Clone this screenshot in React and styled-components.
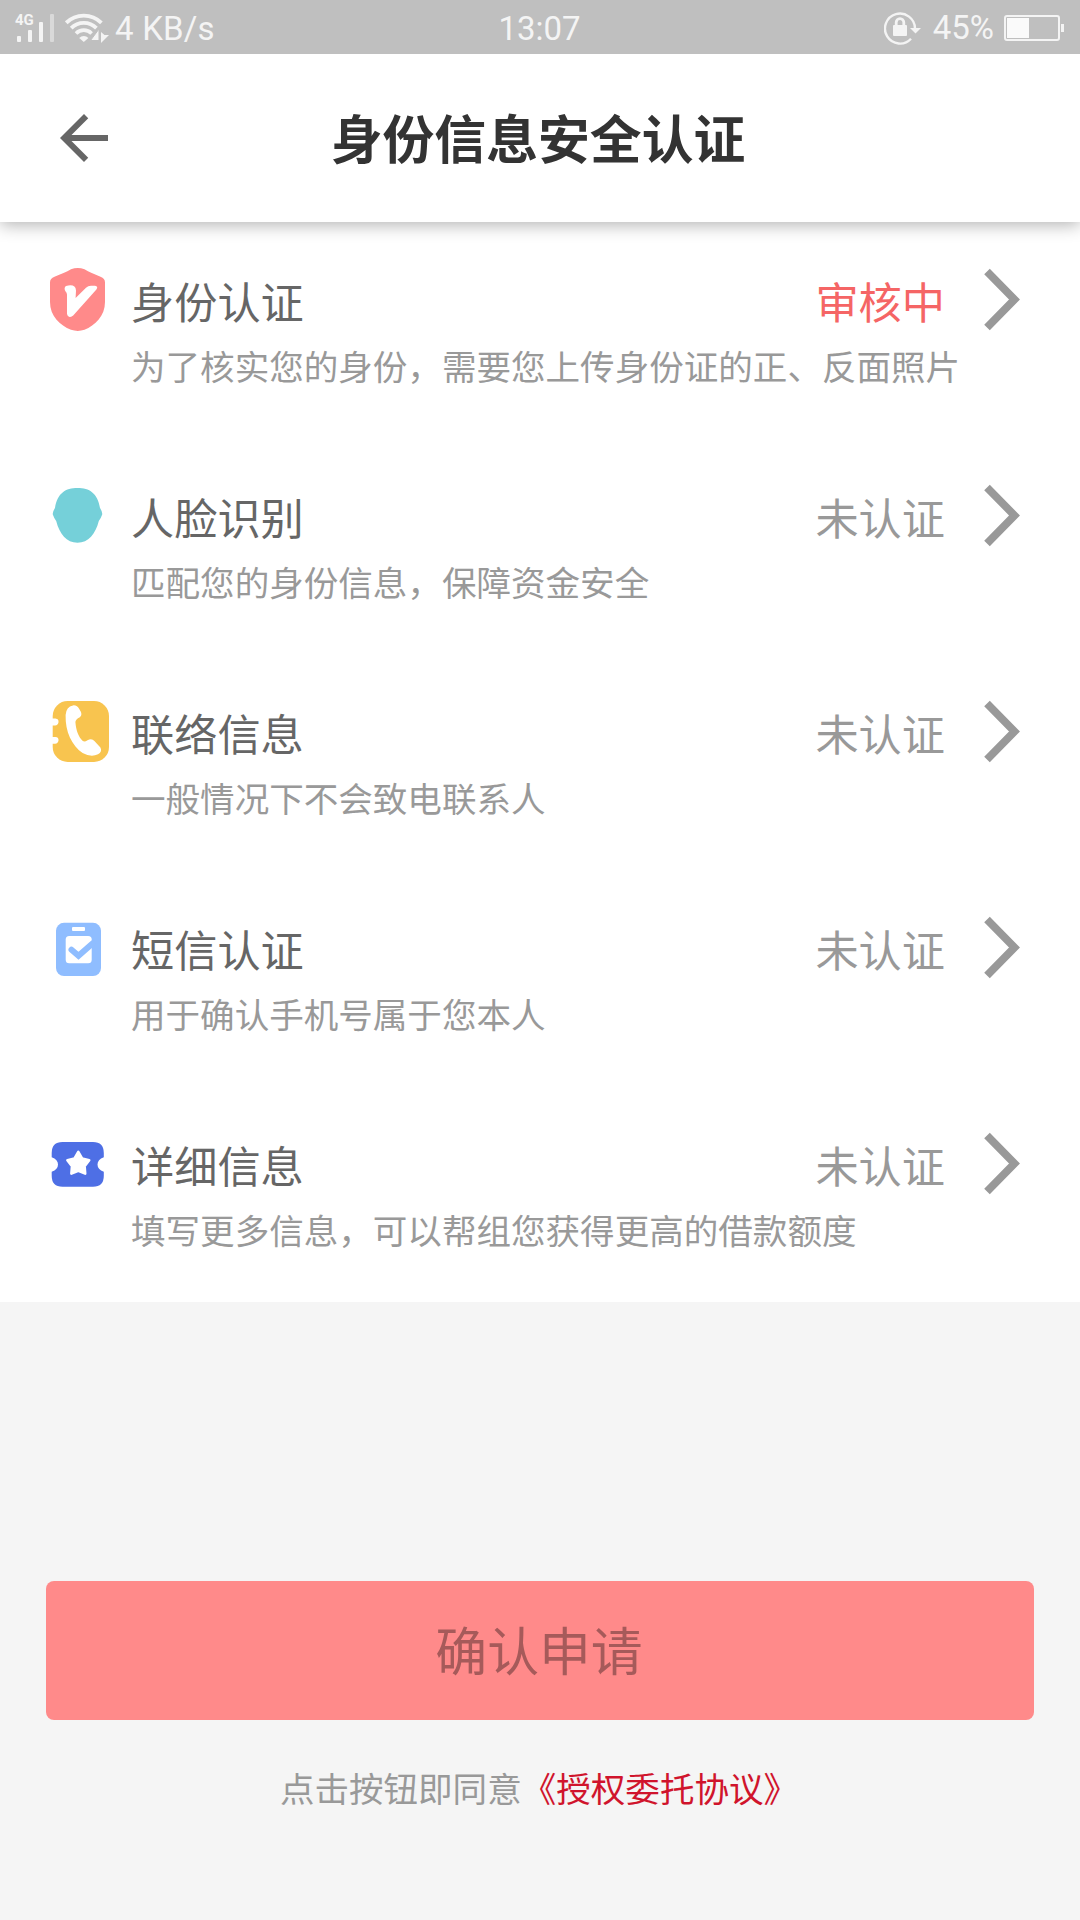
import React from "react";
import styled, { createGlobalStyle } from "styled-components";

const GlobalStyle = createGlobalStyle`
  * {
    box-sizing: border-box;
  }

  body {
    margin: 0;
    background-color: #f5f5f5;
    font-family: "Noto Sans CJK SC", sans-serif;
  }
`;

const Page = styled.div`
  width: 1080px;
  height: 1920px;
  display: flex;
  flex-direction: column;
  background-color: #f5f5f5;
  overflow: hidden;
`;

// Status bar
const StatusBar = styled.div`
  height: 54px;
  flex-shrink: 0;
  display: grid;
  grid-template-columns: 1fr auto 1fr;
  align-items: center;
  padding: 0 16px 0 15px;
  background-color: #bfbfbf;
  color: #f4f4f4;
  font-family: Roboto, sans-serif;
  font-size: 33px;
  line-height: 54px;
`;

const StatusGroup = styled.div`
  display: flex;
  align-items: center;
  justify-content: ${(props) => (props.$end ? "flex-end" : "flex-start")};
`;

const Signal = styled.div`
  position: relative;
  width: 40px;
  height: 54px;
  margin-right: 10px;
`;

const NetworkType = styled.span`
  position: absolute;
  left: 0;
  top: 10px;
  font-size: 15px;
  font-weight: 700;
  line-height: 18px;
`;

const Clock = styled.span`
  padding-top: 2px;
`;

const Speed = styled.span`
  margin-left: 6px;
  padding-top: 2px;
  letter-spacing: 0.2px;
`;

const Battery = styled.span`
  margin: 0 10px 0 12px;
`;

// Title bar
const Header = styled.header`
  position: relative;
  z-index: 1;
  height: 168px;
  flex-shrink: 0;
  display: grid;
  grid-template-columns: 72px 1fr 72px;
  align-items: center;
  padding: 0 48px;
  background-color: #fff;
  box-shadow: 0 3px 16px rgba(0, 0, 0, 0.3);
  clip-path: inset(0 0 -24px 0);
`;

const BackButton = styled.button`
  width: 72px;
  height: 72px;
  padding: 0;
  border: none;
  background: none;
  cursor: pointer;

  svg {
    display: block;
  }
`;

const Title = styled.h1`
  margin: 0;
  padding: 0 4px 2px 0;
  color: #333;
  font-size: 51.84px;
  font-weight: 700;
  line-height: 76px;
  text-align: center;
`;

// List of verifications
const List = styled.ul`
  margin: 0;
  padding: 0;
  list-style: none;
  background-color: #fff;
`;

const Item = styled.li`
  height: 216px;
  display: grid;
  grid-template-columns: 64px 1fr auto 36px;
  grid-template-rows: 64px 50px;
  row-gap: 8px;
  padding: 46px 60px 0 46px;
`;

const ItemName = styled.div`
  padding-left: 21px;
  color: #666;
  font-size: 43.2px;
  line-height: 64px;
`;

const ItemStatus = styled.div`
  margin-right: 39px;
  color: ${(props) => (props.$pending ? "#f56565" : "#999")};
  font-size: 43.2px;
  line-height: 64px;
`;

const ItemNote = styled.div`
  grid-column: 2 / -1;
  padding-left: 21px;
  color: #999;
  font-size: 34.56px;
  line-height: 50px;
  white-space: nowrap;
`;

// Bottom
const Footer = styled.footer`
  display: flex;
  flex-direction: column;
  padding: 279px 46px 0;
`;

const SubmitButton = styled.button`
  height: 139px;
  padding: 0 2px 4px 0;
  border: none;
  border-radius: 8px;
  background-color: #ff8a8a;
  color: #a65a5a;
  font-family: inherit;
  font-size: 51.84px;
  line-height: 76px;
`;

const Agreement = styled.p`
  margin: 42px 0 0;
  padding-right: 2px;
  color: #999;
  font-size: 34.56px;
  line-height: 50px;
  text-align: center;
`;

const AgreementLink = styled.a`
  color: #d0142c;
  text-decoration: none;
`;

const SignalBars = () => (
  <svg width="40" height="54" fill="#f4f4f4">
    <rect x="2" y="35" width="4" height="6" rx="1" />
    <rect x="13" y="29" width="4" height="12" rx="1" />
    <rect x="24" y="21" width="4" height="20" rx="1" />
    <rect x="35" y="13" width="4" height="28" rx="1" opacity="0.5" />
  </svg>
);

const WifiIcon = () => (
  <svg width="44" height="54" fill="none" stroke="#f4f4f4">
    <path d="M1.2 21.8a25 25 0 0 1 35.2 0" strokeWidth="3.8" />
    <path d="M6.2 27.2a17.8 17.8 0 0 1 25.2 0" strokeWidth="3.8" />
    <path d="M11 32.4a11 11 0 0 1 15.6 0" strokeWidth="3.6" />
    <path d="M14.2 37a6.5 6.5 0 0 1 9.2 0L18.8 41z" fill="#f4f4f4" stroke="none" />
    <path d="M34 28v11.500H25.500z" fill="#f4f4f4" stroke="#bfbfbf" strokeWidth="1" />
    <path d="M36 31v11l8-8h-4.500z" fill="#f4f4f4" stroke="none" />
  </svg>
);

const RotationLockIcon = () => (
  <svg width="37" height="54" fill="none" stroke="#f4f4f4">
    <path d="M27 37.8A15 15 0 1 1 31 27.5" strokeWidth="2.4" />
    <path d="M26 27h11l-5.500 5.400z" fill="#f4f4f4" stroke="none" />
    <rect x="9" y="24" width="14" height="11" rx="1" fill="#f4f4f4" stroke="none" />
    <path d="M12.200 25v-3.500a3.800 3.800 0 0 1 7.600 0V25" strokeWidth="2.800" />
  </svg>
);

const BatteryIcon = () => (
  <svg width="60" height="54">
    <rect x="1" y="15" width="54" height="24" rx="2" fill="none" stroke="#f4f4f4" strokeWidth="2" />
    <rect x="3" y="17" width="22" height="20" fill="#fafafa" />
    <rect x="57" y="23" width="3" height="8" fill="#f4f4f4" />
  </svg>
);

const BackIcon = () => (
  <svg width="72" height="72" viewBox="0 0 24 24" fill="#666">
    <path d="M20 11H7.83l5.59-5.59L12 4l-8 8 8 8 1.41-1.41L7.83 13H20v-2z" />
  </svg>
);

const ChevronIcon = () => (
  <svg width="36" height="64" fill="none" stroke="#999" strokeWidth="7.8">
    <path d="M3 3.400 30.500 31.500 3 59.600" />
  </svg>
);

const ShieldIcon = () => (
  <svg width="64" height="64">
    <path
      d="M25 1.200Q31.700-1 38.500 1.200C43 4 48 6 54.500 8.800Q59 10.500 59 14.500V34C59 48 49 57.500 38.500 61.800Q31.700 64 25 61.800C14 57.500 4 48 4 34V14.500Q4 10.500 8.500 8.800C15 6 20.500 4 25 1.200z"
      fill="#ff8a8a"
    />
    <path
      d="M20 18Q29.500 15.600 30 22.400L29.600 30 40 19.800Q42 17.800 45 17.800H49Q52.600 18.400 50.400 21.400L27.200 47.400Q22 51 21 46L21 26.400Q20.800 24.600 19.600 23.600 17.400 20 20 18z"
      fill="#fff"
    />
  </svg>
);

const FaceIcon = () => (
  <svg width="64" height="64">
    <path
      d="M31.500 4C43.500 4 51.500 9 54 24Q56.600 28 56.200 30.500 54.800 34.500 52.800 37C49.500 50 42.500 58.700 31.500 58.700S13.500 50 10.200 37Q8.200 34.500 6.800 30.500 6.400 28 9 24C11.500 9 19.500 4 31.500 4z"
      fill="#75d0d9"
    />
  </svg>
);

const PhoneIcon = () => (
  <svg width="64" height="64">
    <rect x="6.700" y="1" width="56.300" height="61" rx="15" fill="#f8c44f" />
    <path d="M5 18.600h4.500q3.400.4 3 3.600-.4 3-3.400 3.200H5zM5 37h4.500q3.400.4 3 3.600-.4 3-3.400 3.200H5z" fill="#fff" />
    <path
      d="M19.600 15Q20.200 6.400 27 5.400 31.200 5 33.400 9.200 37.200 14.600 33.800 17.200 29.600 19.200 29.400 22C30 30 32.400 37 36.800 41Q38.700 42.200 41.500 40.200 45.800 38 48.400 41L54.400 47.400Q56.600 51.500 52 54.300 45 57.600 36.600 53C25.800 45.400 19.200 32 19.600 15z"
      fill="#fff"
    />
  </svg>
);

const ClipboardIcon = () => (
  <svg width="64" height="64">
    <rect x="10" y="6.800" width="45" height="53.200" rx="8" fill="#8fbdff" />
    <rect x="26" y="11" width="13" height="4" rx="1" fill="#fff" />
    <rect x="19.700" y="20" width="26" height="27.300" rx="3.500" fill="#fff" />
    <path d="M25.500 33.800 32.500 39.800 46.500 27.500" fill="none" stroke="#8fbdff" strokeWidth="6" strokeLinecap="round" />
  </svg>
);

const TicketIcon = () => (
  <svg width="64" height="64">
    <path
      d="M16.500 10H47Q57.800 10 57.800 21V25.200Q51.500 27.500 51.500 32.500T57.800 39.800V43.700Q57.800 54.700 47 54.700H16.500Q5.700 54.700 5.700 43.700V39.800Q12 37.500 12 32.500T5.700 25.200V21Q5.700 10 16.500 10z"
      fill="#4e6fe5"
    />
    <path
      d="M32.300 19.800 36.200 26.600 43.200 28.200 38.600 34.200 39.200 41.600 32.300 38.800 25.400 41.600 26 34.200 21.400 28.200 28.400 26.600z"
      fill="#fff"
      stroke="#fff"
      strokeWidth="2.600"
      strokeLinejoin="round"
    />
  </svg>
);

const items = [
  { icon: ShieldIcon, name: "身份认证", status: "审核中", pending: true, note: "为了核实您的身份，需要您上传身份证的正、反面照片" },
  { icon: FaceIcon, name: "人脸识别", status: "未认证", note: "匹配您的身份信息，保障资金安全" },
  { icon: PhoneIcon, name: "联络信息", status: "未认证", note: "一般情况下不会致电联系人" },
  { icon: ClipboardIcon, name: "短信认证", status: "未认证", note: "用于确认手机号属于您本人" },
  { icon: TicketIcon, name: "详细信息", status: "未认证", note: "填写更多信息，可以帮组您获得更高的借款额度" },
];

function App() {
  return (
    <Page>
      <GlobalStyle />
      <StatusBar>
        <StatusGroup>
          <Signal>
            <SignalBars />
            <NetworkType>4G</NetworkType>
          </Signal>
          <WifiIcon />
          <Speed>4 KB/s</Speed>
        </StatusGroup>
        <Clock>13:07</Clock>
        <StatusGroup $end>
          <RotationLockIcon />
          <Battery>45%</Battery>
          <BatteryIcon />
        </StatusGroup>
      </StatusBar>

      <Header>
        <BackButton>
          <BackIcon />
        </BackButton>
        <Title>身份信息安全认证</Title>
      </Header>

      <List>
        {items.map(({ icon: Icon, name, status, pending, note }) => (
          <Item key={name}>
            <Icon />
            <ItemName>{name}</ItemName>
            <ItemStatus $pending={pending}>{status}</ItemStatus>
            <ChevronIcon />
            <ItemNote>{note}</ItemNote>
          </Item>
        ))}
      </List>

      <Footer>
        <SubmitButton disabled>确认申请</SubmitButton>
        <Agreement>
          点击按钮即同意<AgreementLink>《授权委托协议》</AgreementLink>
        </Agreement>
      </Footer>
    </Page>
  );
}

export default App;
